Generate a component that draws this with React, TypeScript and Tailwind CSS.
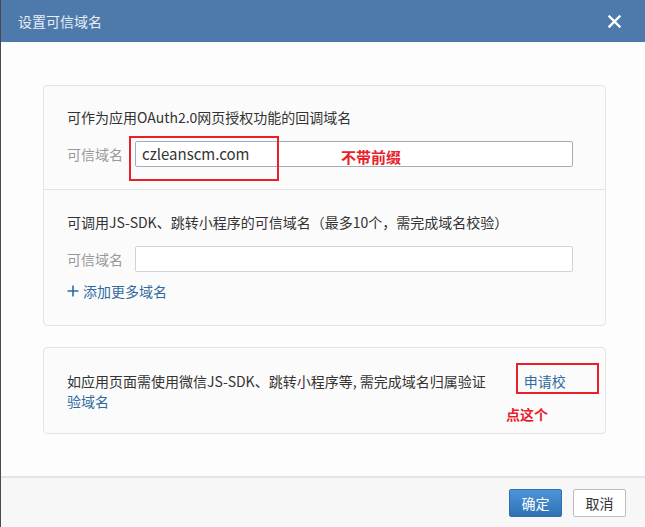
export default function App() {
  const font = { fontFamily: '"Noto Sans CJK SC", "Noto Sans", sans-serif' }

  return (
    <div
      className="flex h-[527px] w-[645px] flex-col overflow-hidden border-l border-[#4a4a4a] bg-[#fdfdfd] text-[14px] text-[#333]"
      style={font}
    >
      {/* Header */}
      <div className="flex h-[42px] shrink-0 items-center justify-between bg-[#4e7aab] pl-[17px] pr-[24px]">
        <span className="text-[14px] leading-[20px] text-[#e6edf5]">设置可信域名</span>
        <svg width="13" height="13" viewBox="0 0 13 13" className="mt-[1px]">
          <path d="M1.5 1.5 L11.5 11.5 M11.5 1.5 L1.5 11.5" stroke="#fff" strokeWidth="2.4" strokeLinecap="square" />
        </svg>
      </div>

      {/* Body */}
      <div className="flex-1 pl-[42px] pr-[39px] pt-[43px]">
        {/* Domain card */}
        <div className="relative rounded-[4px] border border-[#e4e4e4] bg-[#fbfbfb]">
          <div className="border-b border-[#e4e4e4] pl-[23px] pr-[32px] pb-[22px] pt-[21px]">
            <p className="leading-[20px]">可作为应用OAuth2.0网页授权功能的回调域名</p>
            <div className="mt-[14px] flex items-center gap-[12px]">
              <span className="w-[56px] text-[#999]">可信域名</span>
              <div className="flex h-[26px] flex-1 items-center rounded-[2px] border border-[#a3adb8] bg-white px-[6px] text-[15px] text-[#333]">
                czleanscm.com
              </div>
            </div>
          </div>
          <div className="pl-[23px] pr-[32px] pb-[24px] pt-[22px]">
            <p className="leading-[20px]">可调用JS-SDK、跳转小程序的可信域名（最多10个，需完成域名校验）</p>
            <div className="mt-[14px] flex items-center gap-[12px]">
              <span className="w-[56px] text-[#999]">可信域名</span>
              <div className="h-[26px] flex-1 rounded-[2px] border border-[#cfd4da] bg-white" />
            </div>
            <div className="mt-[9px] flex items-center gap-[4px] leading-[20px] text-[#306aa0]">
              <svg width="12" height="12" viewBox="0 0 12 12">
                <path d="M6 0.5 V11.5 M0.5 6 H11.5" stroke="#306aa0" strokeWidth="1.6" />
              </svg>
              <span>添加更多域名</span>
            </div>
          </div>

          {/* annotations */}
          <div className="absolute left-[85px] top-[50px] h-[45px] w-[150px] border-2 border-[#e8202a]" />
          <span className="absolute left-[297px] top-[61px] text-[15px] font-bold leading-[20px] text-[#e8202a]">不带前缀</span>
        </div>

        {/* Verify card */}
        <div className="relative mt-[21px] rounded-[4px] border border-[#e4e4e4] bg-[#fbfbfb] pb-[22px] pl-[23px] pr-[22px] pt-[23px]">
          <p className="leading-[20px]">
            如应用页面需使用微信JS-SDK、跳转小程序等, 需完成域名归属验证
            <span className="ml-[38px] text-[#306aa0]">申请校</span>
            <br />
            <span className="text-[#306aa0]">验域名</span>
          </p>
          <div className="absolute left-[472px] top-[15px] h-[31px] w-[83px] border-2 border-[#e8202a]" />
          <span className="absolute left-[462px] top-[56px] font-bold leading-[20px] text-[#e8202a]">点这个</span>
        </div>
      </div>

      {/* Footer */}
      <div className="flex h-[51px] shrink-0 justify-end gap-[11px] border-t-2 border-[#e3e4e8] bg-[#f7f7f7] pr-[19px] pt-[11px]">
        <button className="h-[28px] w-[53px] rounded-[2px] border border-[#2f6ea9] bg-gradient-to-b from-[#4d95da] to-[#2e72b3] text-[14px] text-white">
          确定
        </button>
        <button className="h-[28px] w-[53px] rounded-[2px] border border-[#bdbdbd] bg-white text-[14px] text-[#333]">
          取消
        </button>
      </div>
    </div>
  )
}
